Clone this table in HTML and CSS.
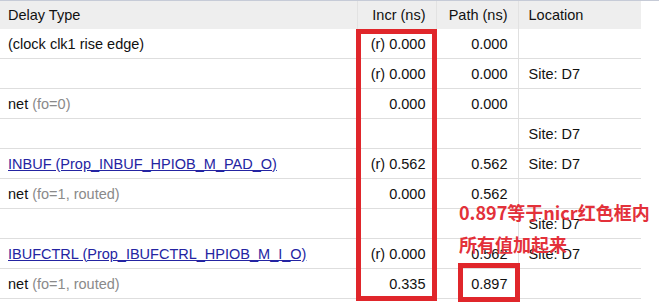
FILE: index.html
```html
<!DOCTYPE html>
<html>
<head>
<meta charset="utf-8">
<link rel="stylesheet" href="styles.css">
</head>
<body>
<div class="frame">
  <table class="timing">
    <colgroup>
      <col class="c-type"><col class="c-incr"><col class="c-path"><col class="c-loc">
    </colgroup>
    <thead>
      <tr><th class="left">Delay Type</th><th class="right-h">Incr (ns)</th><th class="right-h">Path (ns)</th><th class="left">Location</th></tr>
    </thead>
    <tbody>
      <tr><td>(clock clk1 rise edge)</td><td class="num">(r) 0.000</td><td class="num">0.000</td><td></td></tr>
      <tr><td></td><td class="num">(r) 0.000</td><td class="num">0.000</td><td>Site: D7</td></tr>
      <tr><td>net <span class="dim">(fo=0)</span></td><td class="num">0.000</td><td class="num">0.000</td><td></td></tr>
      <tr><td></td><td></td><td></td><td>Site: D7</td></tr>
      <tr><td><a class="lnk">INBUF (Prop_INBUF_HPIOB_M_PAD_O)</a></td><td class="num">(r) 0.562</td><td class="num">0.562</td><td>Site: D7</td></tr>
      <tr><td>net <span class="dim">(fo=1, routed)</span></td><td class="num">0.000</td><td class="num">0.562</td><td></td></tr>
      <tr><td></td><td></td><td></td><td>Site: D7</td></tr>
      <tr><td><a class="lnk">IBUFCTRL (Prop_IBUFCTRL_HPIOB_M_I_O)</a></td><td class="num">(r) 0.000</td><td class="num">0.562</td><td>Site: D7</td></tr>
      <tr><td>net <span class="dim">(fo=1, routed)</span></td><td class="num">0.335</td><td class="num">0.897</td><td></td></tr>
    </tbody>
  </table>
  <div class="mark mark-incr"></div>
  <div class="mark mark-path"></div>
  <div class="note">0.897等于nicr红色框内<br>所有值加起来</div>
</div>
</body>
</html>
```
FILE: styles.css
```css
html, body {
  margin: 0;
  padding: 0;
  background: #ffffff;
}
body {
  font-family: "Liberation Sans", Arial, sans-serif;
  font-size: 14.5px;
  color: #111111;
}
.frame {
  position: relative;
  width: 659px;
  height: 303px;
  overflow: hidden;
  border-top: 1px solid #c6cbd7;
  box-sizing: border-box;
}
.timing {
  border-collapse: collapse;
  table-layout: fixed;
  width: 641px;
}
.c-type { width: 357px; }
.c-incr { width: 79px; }
.c-path { width: 82px; }
.c-loc { width: 123px; }
.timing th {
  background: #eeeeee;
  font-weight: normal;
  height: 28px;
  padding: 0 8px;
  border-right: 1px solid #e2e2e2;
  text-align: left;
  white-space: nowrap;
}
.timing th.right-h {
  text-align: right;
  padding-right: 10px;
}
.timing th:last-child { border-right: none; padding-left: 10px; }
.timing td {
  height: 29px;
  padding: 0 8px;
  border-right: 1px solid #e0e0e0;
  border-bottom: 1px solid #dedede;
  white-space: nowrap;
  overflow: visible;
}
.timing td:last-child { border-right: none; padding-left: 10px; }
.timing td.num {
  text-align: right;
  padding-right: 10px;
}
.dim { color: #8a8a8a; }
.lnk {
  color: #2424a2;
  text-decoration: underline;
}
.mark {
  position: absolute;
  border: 5px solid #e0262b;
  box-sizing: border-box;
}
.mark-incr {
  left: 356px;
  top: 28px;
  width: 81px;
  height: 272px;
}
.mark-path {
  left: 458px;
  top: 262px;
  width: 62px;
  height: 39px;
}
.note {
  position: absolute;
  left: 459px;
  top: 195px;
  font-family: "Noto Sans CJK SC", "Noto Sans", sans-serif;
  font-weight: bold;
  font-size: 18px;
  line-height: 32px;
  color: #e3313a;
  white-space: nowrap;
}
```
